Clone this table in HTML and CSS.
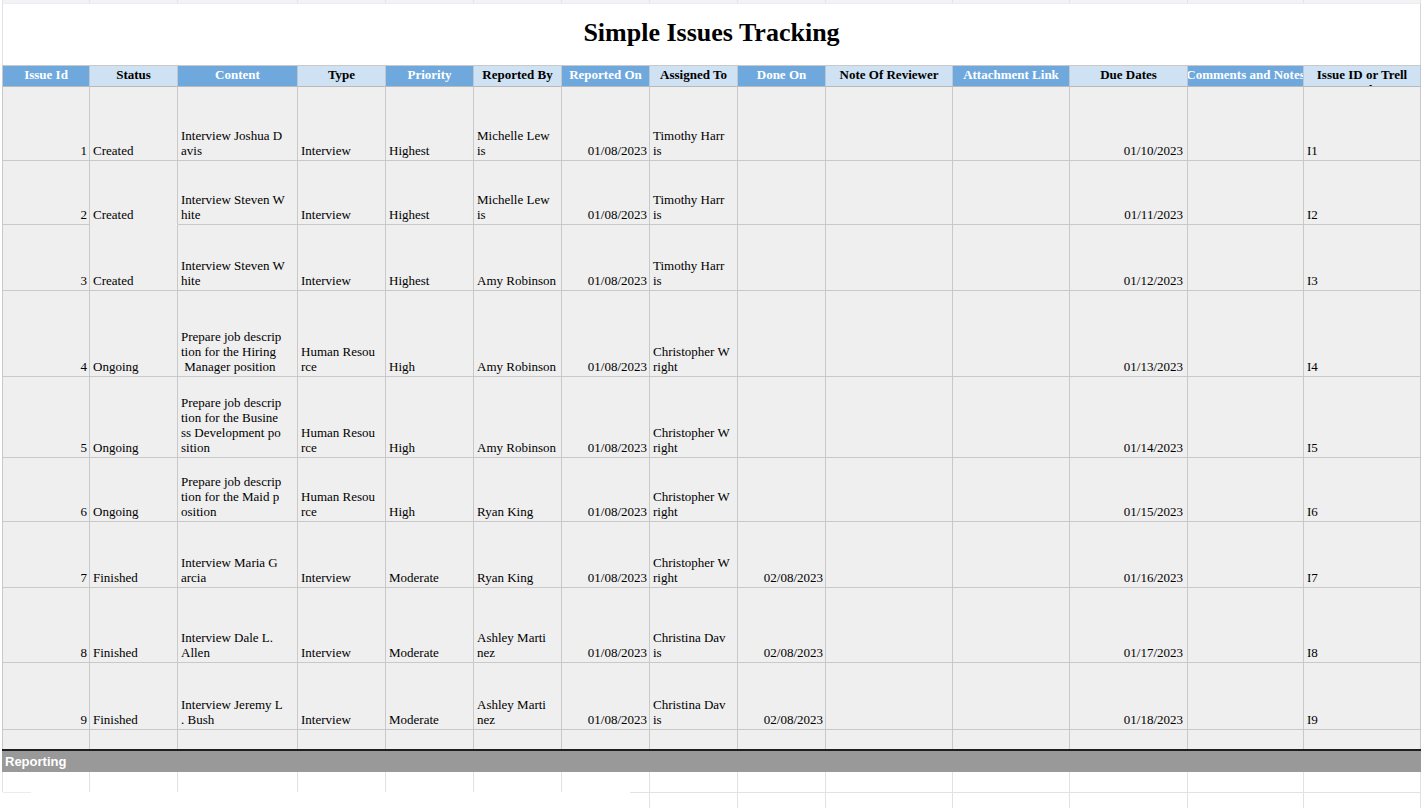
FILE: index.html
```html
<!DOCTYPE html>
<html lang="en">
<head>
<meta charset="utf-8">
<title>Simple Issues Tracking</title>
<link rel="stylesheet" href="styles.css">
</head>
<body>
<div class="grid strip">
  <div></div><div></div><div></div><div></div><div></div><div></div><div></div>
  <div></div><div></div><div></div><div></div><div></div><div></div><div></div>
</div>
<div class="title"><h1>Simple Issues Tracking</h1></div>
<div class="grid table">
  <div class="hd dark">Issue Id</div>
  <div class="hd light">Status</div>
  <div class="hd dark">Content</div>
  <div class="hd light">Type</div>
  <div class="hd dark">Priority</div>
  <div class="hd light">Reported By</div>
  <div class="hd dark">Reported On</div>
  <div class="hd light">Assigned To</div>
  <div class="hd dark">Done On</div>
  <div class="hd light">Note Of Reviewer</div>
  <div class="hd dark">Attachment Link</div>
  <div class="hd light">Due Dates</div>
  <div class="hd dark">Comments and Notes</div>
  <div class="hd light wrap"><span>Issue ID or Trell<br>o Card ID</span></div>

  <div class="c r">1</div><div class="c">Created</div><div class="c">Interview Joshua D<br>avis</div><div class="c">Interview</div><div class="c">Highest</div><div class="c">Michelle Lew<br>is</div><div class="c r">01/08/2023</div><div class="c">Timothy Harr<br>is</div><div class="c r"></div><div class="c"></div><div class="c"></div><div class="c r due">01/10/2023</div><div class="c"></div><div class="c">I1</div>

  <div class="c r">2</div><div class="c nob">Created</div><div class="c">Interview Steven W<br>hite</div><div class="c">Interview</div><div class="c">Highest</div><div class="c">Michelle Lew<br>is</div><div class="c r">01/08/2023</div><div class="c">Timothy Harr<br>is</div><div class="c r"></div><div class="c"></div><div class="c"></div><div class="c r due">01/11/2023</div><div class="c"></div><div class="c">I2</div>

  <div class="c r">3</div><div class="c">Created</div><div class="c">Interview Steven W<br>hite</div><div class="c">Interview</div><div class="c">Highest</div><div class="c">Amy Robinson</div><div class="c r">01/08/2023</div><div class="c">Timothy Harr<br>is</div><div class="c r"></div><div class="c"></div><div class="c"></div><div class="c r due">01/12/2023</div><div class="c"></div><div class="c">I3</div>

  <div class="c r">4</div><div class="c">Ongoing</div><div class="c">Prepare job descrip<br>tion for the Hiring<br>&nbsp;Manager position</div><div class="c">Human Resou<br>rce</div><div class="c">High</div><div class="c">Amy Robinson</div><div class="c r">01/08/2023</div><div class="c">Christopher W<br>right</div><div class="c r"></div><div class="c"></div><div class="c"></div><div class="c r due">01/13/2023</div><div class="c"></div><div class="c">I4</div>

  <div class="c r">5</div><div class="c">Ongoing</div><div class="c">Prepare job descrip<br>tion for the Busine<br>ss Development po<br>sition</div><div class="c">Human Resou<br>rce</div><div class="c">High</div><div class="c">Amy Robinson</div><div class="c r">01/08/2023</div><div class="c">Christopher W<br>right</div><div class="c r"></div><div class="c"></div><div class="c"></div><div class="c r due">01/14/2023</div><div class="c"></div><div class="c">I5</div>

  <div class="c r">6</div><div class="c">Ongoing</div><div class="c">Prepare job descrip<br>tion for the Maid p<br>osition</div><div class="c">Human Resou<br>rce</div><div class="c">High</div><div class="c">Ryan King</div><div class="c r">01/08/2023</div><div class="c">Christopher W<br>right</div><div class="c r"></div><div class="c"></div><div class="c"></div><div class="c r due">01/15/2023</div><div class="c"></div><div class="c">I6</div>

  <div class="c r">7</div><div class="c">Finished</div><div class="c">Interview Maria G<br>arcia</div><div class="c">Interview</div><div class="c">Moderate</div><div class="c">Ryan King</div><div class="c r">01/08/2023</div><div class="c">Christopher W<br>right</div><div class="c r">02/08/2023</div><div class="c"></div><div class="c"></div><div class="c r due">01/16/2023</div><div class="c"></div><div class="c">I7</div>

  <div class="c r">8</div><div class="c">Finished</div><div class="c">Interview Dale L.<br>Allen</div><div class="c">Interview</div><div class="c">Moderate</div><div class="c">Ashley Marti<br>nez</div><div class="c r">01/08/2023</div><div class="c">Christina Dav<br>is</div><div class="c r">02/08/2023</div><div class="c"></div><div class="c"></div><div class="c r due">01/17/2023</div><div class="c"></div><div class="c">I8</div>

  <div class="c r">9</div><div class="c">Finished</div><div class="c">Interview Jeremy L<br>. Bush</div><div class="c">Interview</div><div class="c">Moderate</div><div class="c">Ashley Marti<br>nez</div><div class="c r">01/08/2023</div><div class="c">Christina Dav<br>is</div><div class="c r">02/08/2023</div><div class="c"></div><div class="c"></div><div class="c r due">01/18/2023</div><div class="c"></div><div class="c">I9</div>

  <div class="c e"></div><div class="c e"></div><div class="c e"></div><div class="c e"></div><div class="c e"></div><div class="c e"></div><div class="c e"></div>
  <div class="c e"></div><div class="c e"></div><div class="c e"></div><div class="c e"></div><div class="c e"></div><div class="c e"></div><div class="c e"></div>
</div>
<div class="rule"></div>
<div class="report">Reporting</div>
<div class="grid tail">
  <div></div><div></div><div></div><div></div><div></div><div></div><div></div>
  <div></div><div></div><div></div><div></div><div></div><div></div><div></div>
</div>
<div class="grid tail2">
  <div class="stub"></div><div></div><div></div><div></div><div></div><div></div><div class="part"></div>
  <div class="on"></div><div class="on"></div><div class="on"></div><div class="on"></div><div class="on"></div><div class="on"></div><div class="on"></div>
</div>
</body>
</html>
```

FILE: styles.css
```css
* { box-sizing: border-box; }

html, body {
  margin: 0;
  padding: 0;
  background: #ffffff;
}

body {
  width: 1422px;
  height: 808px;
  overflow: hidden;
  font-family: "Liberation Serif", "Times New Roman", serif;
  font-size: 13px;
  color: #000;
}

.grid {
  display: grid;
  grid-template-columns: 87px 88px 120px repeat(6, 88px) 127px 117px 118px 116px 117px;
  margin-left: 2px;
  width: 1419px;
  border-left: 1px solid #c9c9c9;
}

/* partial row at very top */
.strip {
  border-left-color: #e3e3e6;
}
.strip div {
  height: 3px;
  background: #f3f3f6;
  border-right: 1px solid #e3e3e6;
}

.title {
  margin-left: 2px;
  width: 1419px;
  height: 62px;
  border-left: 1px solid #e3e3e6;
  border-right: 1px solid #d6d6d6;
  border-top: 1px solid #ececf0;
  text-align: center;
  padding-top: 14px;
}
.title h1 {
  margin: 0;
  font-size: 26px;
  line-height: 30px;
  font-weight: bold;
}

.table {
  border-top: 1px solid #c9c9c9;
  grid-template-rows: 21px 74px 64px 66px 86px 81px 64px 66px 75px 67px 19px;
}

.hd {
  display: flex;
  align-items: center;
  justify-content: center;
  font-weight: bold;
  line-height: 15px;
  white-space: nowrap;
  overflow: hidden;
  padding-bottom: 4px;
  border-right: 1px solid #bfc7cf;
  border-bottom: 1px solid #b9b9b9;
}
.dark { background: #6fa8dc; color: #fff; }
.light { background: #cfe2f3; color: #000; }

.hd.wrap {
  align-items: flex-start;
  padding-top: 1px;
  padding-bottom: 0;
  text-align: center;
}

.c {
  display: flex;
  flex-direction: column;
  justify-content: flex-end;
  align-items: flex-start;
  background: #efefef;
  border-right: 1px solid #c9c9c9;
  border-bottom: 1px solid #c9c9c9;
  padding: 0 3px 2px 3px;
  line-height: 15px;
  white-space: nowrap;
  overflow: hidden;
}
.c.r {
  align-items: flex-end;
  text-align: right;
  padding-right: 2px;
}
.c.r.due {
  padding-right: 4px;
}
.c.nob {
  border-bottom-color: #efefef;
}
.c.e {
  border-bottom: none;
}

.rule {
  margin-left: 2px;
  width: 1419px;
  height: 2px;
  background: #1e1e1e;
}

.report {
  margin-left: 2px;
  width: 1419px;
  height: 21px;
  background: #999999;
  color: #fff;
  font-family: "Liberation Sans", Arial, sans-serif;
  font-weight: bold;
  font-size: 13px;
  line-height: 21px;
  padding-left: 3px;
}

.tail {
  border-left-color: #e2e2e2;
}
.tail div {
  height: 20px;
  border-right: 1px solid #e2e2e2;
}

.tail2 {
  border-left-color: transparent;
}
.tail2 div {
  height: 16px;
}
.tail2 .stub {
  background: linear-gradient(#ececec, #ececec) left top / 28px 1px no-repeat;
}
.tail2 .part {
  border-right: 1px solid #e2e2e2;
  background: linear-gradient(#e2e2e2, #e2e2e2) right top / 19px 1px no-repeat;
}
.tail2 .on {
  border-top: 1px solid #e2e2e2;
  border-right: 1px solid #e2e2e2;
}
```
